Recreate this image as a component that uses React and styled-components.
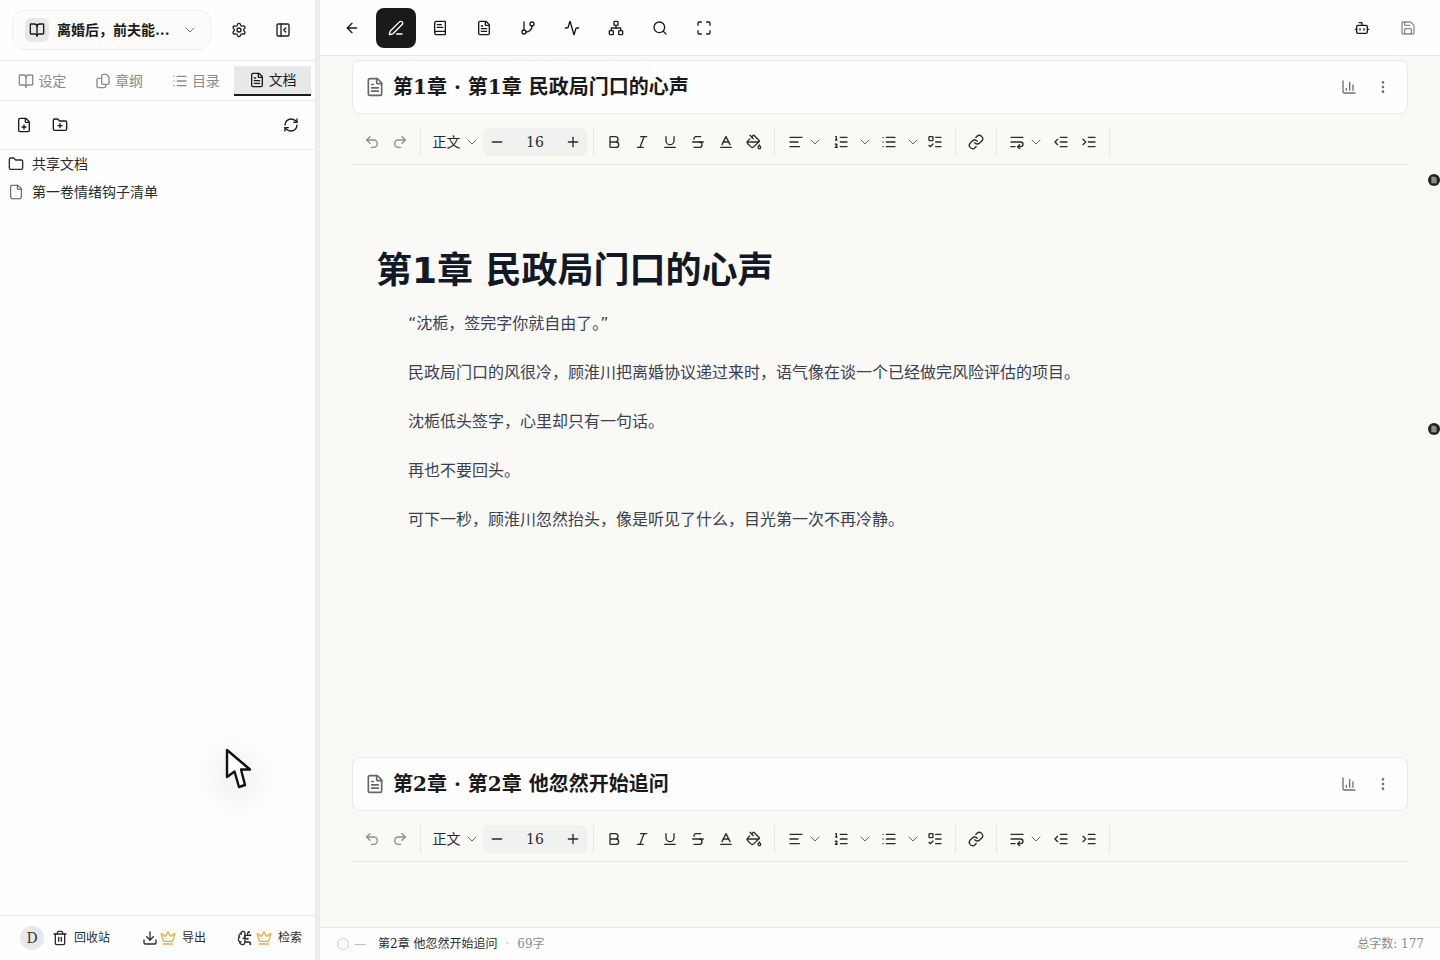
import React from 'react'
import styled, { createGlobalStyle } from 'styled-components'
import {
  Activity, AlignLeft, ArrowLeft, Baseline, Bold, BookOpen, BookText, Bot, BrainCircuit, ChartColumn, ChevronDown,
  Crown, Download, EllipsisVertical, File, FilePlus, FileText, Folder, FolderPlus, GitBranch, IndentDecrease,
  IndentIncrease, Italic, Link, List, ListOrdered, ListTodo, Maximize, Minus, Network, PaintBucket,
  PanelLeftClose, PenLine, Plus, Redo2, RefreshCw, Save, Search, Settings, Strikethrough, Trash2, Underline,
  Undo2, WrapText, Hexagon,
} from 'lucide-react'

const Global = createGlobalStyle`
  html, body { margin: 0; padding: 0; height: 100%; }
  body {
    font-family: "DejaVu Serif", "Noto Sans CJK SC", serif;
    line-height: 1.5;
    color: #1a1a1a;
    background: #fff;
    overflow: hidden;
  }
  #root { height: 100%; }
`

const Page = styled.div`
  display: flex;
  width: 1440px;
  height: 960px;
  position: relative;
  overflow: hidden;
`

/* sidebar */
const Sidebar = styled.aside`
  width: 315px;
  flex-shrink: 0;
  display: flex;
  flex-direction: column;
  background: #fefefe;
`
const Resizer = styled.div`
  width: 5px;
  flex-shrink: 0;
  background: #ececec;
`
const SideHead = styled.div`
  height: 60px;
  flex-shrink: 0;
  display: flex;
  align-items: center;
  padding-left: 12px;
  border-bottom: 1px solid #e8e8e8;
  box-sizing: content-box;
`
const BookPicker = styled.div`
  width: 199px;
  height: 40px;
  flex-shrink: 0;
  box-sizing: border-box;
  display: flex;
  align-items: center;
  padding: 0 12px;
  background: #fdfcfb;
  border: 1px solid #f1f0ee;
  border-radius: 12px;
`
const BookIcon = styled.span`
  width: 24px;
  height: 24px;
  border-radius: 6px;
  background: #e8e8e6;
  display: flex;
  align-items: center;
  justify-content: center;
  margin-right: 8px;
  flex-shrink: 0;
`
const BookName = styled.span`
  flex: 1;
  font-size: 14px;
  font-weight: 700;
  white-space: nowrap;
`
const HeadIcons = styled.div`
  display: flex;
  margin-left: 6px;
`
const HeadBtn = styled.span`
  width: 44px;
  height: 32px;
  display: flex;
  align-items: center;
  justify-content: center;
`
const Tabs = styled.div`
  height: 39px;
  flex-shrink: 0;
  display: grid;
  grid-template-columns: repeat(4, 1fr);
  padding: 0 4px;
  align-items: start;
  border-bottom: 1px solid #e8e8e8;
`
const Tab = styled.div`
  height: 30px;
  margin-top: 5px;
  box-sizing: border-box;
  display: flex;
  align-items: center;
  justify-content: center;
  gap: 4px;
  font-size: 14px;
  color: ${(p) => (p.active ? '#1a1a1a' : '#8a8a8a')};
  background: ${(p) => (p.active ? '#e8e8e8' : 'transparent')};
  border-bottom: ${(p) => (p.active ? '2px solid #1a1a1a' : 'none')};
`
const SideTools = styled.div`
  height: 48px;
  flex-shrink: 0;
  display: flex;
  align-items: center;
  padding: 0 6px;
  border-bottom: 1px solid #e8e8e8;
`
const SideTool = styled.span`
  width: 36px;
  height: 32px;
  display: flex;
  align-items: center;
  justify-content: center;
  ${(p) => p.push && 'margin-left: auto;'}
`
const Tree = styled.div`
  flex: 1;
`
const TreeRow = styled.div`
  height: 28px;
  display: flex;
  align-items: center;
  gap: 8px;
  padding-left: 8px;
  font-size: 14px;
  color: #2a2a2a;
`
const SideFoot = styled.div`
  height: 44px;
  flex-shrink: 0;
  display: flex;
  align-items: center;
  padding: 0 13px 0 20px;
  border-top: 1px solid #e8e8e8;
  font-size: 12px;
  color: #2a2a2a;
  white-space: nowrap;
`
const Avatar = styled.span`
  width: 24px;
  height: 24px;
  flex-shrink: 0;
  border-radius: 50%;
  background: #e8e8e8;
  display: flex;
  align-items: center;
  justify-content: center;
  font-size: 14px;
  color: #333;
  margin-right: 8px;
`
const FootBtn = styled.span`
  display: flex;
  align-items: center;
  gap: ${(p) => p.gap}px;
  margin-left: ${(p) => p.left || 0}px;
`
const FootLabel = styled.span`
  margin-left: ${(p) => p.left}px;
`

/* main */
const Main = styled.main`
  flex: 1;
  min-width: 0;
  display: flex;
  flex-direction: column;
  background: #faf9f6;
`
const TopBar = styled.div`
  height: 55px;
  flex-shrink: 0;
  display: flex;
  align-items: center;
  gap: 4px;
  padding: 0 12px;
  background: #fefefe;
  border-bottom: 1px solid #e8e8e8;
`
const TopBtn = styled.span`
  width: 40px;
  height: 40px;
  display: flex;
  align-items: center;
  justify-content: center;
  border-radius: 8px;
  color: ${(p) => (p.active ? '#fff' : '#1a1a1a')};
  background: ${(p) => (p.active ? '#1a1a1a' : 'transparent')};
`
const TopRight = styled.div`
  display: flex;
  gap: 6px;
  margin-left: auto;
`
const Scroll = styled.div`
  flex: 1;
  min-height: 0;
  overflow: hidden;
  padding: 0 32px;
`
const Chapter = styled.section`
  height: 697px;
  padding-top: 4px;
  box-sizing: border-box;
`
const TitleCard = styled.div`
  height: 54px;
  box-sizing: border-box;
  display: flex;
  align-items: center;
  padding: 0 7px 0 12px;
  background: #fefefe;
  border: 1px solid #e9e9e7;
  border-radius: 8px;
`
const TitleText = styled.h2`
  margin: 0 0 0 8px;
  flex: 1;
  font-size: 20px;
  font-weight: 700;
  color: #1a1a1a;
`
const TitleBtn = styled.span`
  width: 34px;
  display: flex;
  justify-content: center;
  color: #6f6f6f;
`
const Toolbar = styled.div`
  height: 51px;
  box-sizing: border-box;
  display: flex;
  align-items: center;
  padding: 6px 0 0 6px;
  border-bottom: 1px solid #e8e8e8;
`
const ToolBtn = styled.span`
  width: ${(p) => p.w || 28}px;
  height: 28px;
  flex-shrink: 0;
  display: flex;
  align-items: center;
  justify-content: center;
  gap: ${(p) => p.gap || 0}px;
  margin-left: ${(p) => p.ml || 0}px;
  color: ${(p) => (p.faded ? '#8c8c8c' : '#2a2a2a')};
`
const Sep = styled.span`
  width: 1px;
  height: 28px;
  margin: 0 6px;
  background: #e6e6e3;
  flex-shrink: 0;
`
const StyleSelect = styled.span`
  width: 56px;
  box-sizing: border-box;
  padding-left: 2px;
  display: flex;
  align-items: center;
  justify-content: center;
  gap: 3px;
  font-size: 14px;
  color: #2a2a2a;
`
const Stepper = styled.span`
  width: 104px;
  height: 28px;
  display: flex;
  align-items: center;
  justify-content: space-between;
  background: #f1f1ef;
  border-radius: 6px;
  font-size: 14px;
  color: #2a2a2a;
`
const Editor = styled.div`
  padding: 81px 24px 0;
`
const Heading = styled.h1`
  margin: 0 0 15px;
  font-family: "DejaVu Sans", "Noto Sans CJK SC", sans-serif;
  font-size: 36px;
  line-height: 50px;
  font-weight: 700;
  color: #111827;
`
const Para = styled.p`
  margin: 0 0 23.4px;
  font-family: "DejaVu Sans", "Noto Sans CJK SC", sans-serif;
  font-size: 16px;
  line-height: 25.6px;
  text-indent: 32px;
  color: #374151;
`
const StatusBar = styled.div`
  height: 33px;
  flex-shrink: 0;
  box-sizing: border-box;
  display: flex;
  align-items: center;
  padding: 0 16px;
  background: #fefefe;
  border-top: 1px solid #e8e8e8;
  font-size: 12px;
  color: #8a8a8a;
`
const StatusName = styled.span`
  color: #2a2a2a;
  margin-left: 8px;
`
const Dim = styled.span`
  margin: 0 ${(p) => p.gap || 0}px;
  color: #bdbdbd;
`
const Total = styled.span`
  margin-left: auto;
`

/* things lying over the page */
const Marker = styled.span`
  position: absolute;
  right: 0;
  top: ${(p) => p.top}px;
  width: 12px;
  height: 12px;
  border-radius: 50%;
  background: #222;
  display: flex;
  align-items: center;
  justify-content: center;
`
const Cursor = styled.svg`
  position: absolute;
  left: 224px;
  top: 746px;
  overflow: visible;
  filter: drop-shadow(0 8px 18px rgba(0, 0, 0, 0.2));
`

const Ico = ({ as: I, size = 16, sw = 2 }) => <I size={size} strokeWidth={sw} />

const Chev = () => <ChevronDown size={16} strokeWidth={1.5} color="#666" />

const StackedPages = () => (
  <svg width="16" height="16" viewBox="0 0 24 24" fill="none" stroke="currentColor" strokeWidth="2" strokeLinecap="round" strokeLinejoin="round">
    <path d="M8 8H5a2 2 0 0 0-2 2v10a2 2 0 0 0 2 2h9a2 2 0 0 0 2-2v-3" />
    <path d="M10 4a2 2 0 0 1 2-2h5l4 4v9a2 2 0 0 1-2 2h-7a2 2 0 0 1-2-2z" />
  </svg>
)

const EditorToolbar = () => (
  <Toolbar>
    <ToolBtn faded><Ico as={Undo2} /></ToolBtn>
    <ToolBtn faded><Ico as={Redo2} /></ToolBtn>
    <Sep />
    <StyleSelect>正文 <Chev /></StyleSelect>
    <Stepper>
      <ToolBtn><Ico as={Minus} /></ToolBtn>
      16
      <ToolBtn><Ico as={Plus} /></ToolBtn>
    </Stepper>
    <Sep />
    <ToolBtn><Ico as={Bold} /></ToolBtn>
    <ToolBtn><Ico as={Italic} /></ToolBtn>
    <ToolBtn><Ico as={Underline} /></ToolBtn>
    <ToolBtn><Ico as={Strikethrough} /></ToolBtn>
    <ToolBtn><Ico as={Baseline} /></ToolBtn>
    <ToolBtn><Ico as={PaintBucket} /></ToolBtn>
    <Sep />
    <ToolBtn w={48} gap={3}><Ico as={AlignLeft} /><Chev /></ToolBtn>
    <ToolBtn w={48} gap={8}><Ico as={ListOrdered} /><Chev /></ToolBtn>
    <ToolBtn w={48} gap={8}><Ico as={List} /><Chev /></ToolBtn>
    <ToolBtn ml={-4}><Ico as={ListTodo} /></ToolBtn>
    <Sep />
    <ToolBtn><Ico as={Link} /></ToolBtn>
    <Sep />
    <ToolBtn w={46} gap={3}><Ico as={WrapText} /><Chev /></ToolBtn>
    <ToolBtn ml={-2}><Ico as={IndentDecrease} /></ToolBtn>
    <ToolBtn><Ico as={IndentIncrease} /></ToolBtn>
    <Sep />
  </Toolbar>
)

const ChapterBlock = ({ title, children }) => (
  <Chapter>
    <TitleCard>
      <FileText size={20} strokeWidth={2} color="#666" />
      <TitleText>{title}</TitleText>
      <TitleBtn><Ico as={ChartColumn} /></TitleBtn>
      <TitleBtn><Ico as={EllipsisVertical} /></TitleBtn>
    </TitleCard>
    <EditorToolbar />
    {children}
  </Chapter>
)

export default function App() {
  return (
    <Page>
      <Global />
      <Sidebar>
        <SideHead>
          <BookPicker>
            <BookIcon><Ico as={BookOpen} /></BookIcon>
            <BookName>离婚后，前夫能...</BookName>
            <ChevronDown size={16} strokeWidth={1.5} color="#777" />
          </BookPicker>
          <HeadIcons>
            <HeadBtn><Ico as={Settings} /></HeadBtn>
            <HeadBtn><Ico as={PanelLeftClose} /></HeadBtn>
          </HeadIcons>
        </SideHead>
        <Tabs>
          <Tab><Ico as={BookOpen} /> 设定</Tab>
          <Tab><StackedPages /> 章纲</Tab>
          <Tab><Ico as={List} /> 目录</Tab>
          <Tab active><Ico as={FileText} /> 文档</Tab>
        </Tabs>
        <SideTools>
          <SideTool><Ico as={FilePlus} /></SideTool>
          <SideTool><Ico as={FolderPlus} /></SideTool>
          <SideTool push><Ico as={RefreshCw} /></SideTool>
        </SideTools>
        <Tree>
          <TreeRow><Folder size={16} strokeWidth={2} />共享文档</TreeRow>
          <TreeRow><File size={16} strokeWidth={1.6} color="#555" />第一卷情绪钩子清单</TreeRow>
        </Tree>
        <SideFoot>
          <Avatar>D</Avatar>
          <FootBtn gap={6}><Ico as={Trash2} />回收站</FootBtn>
          <FootBtn left={32} gap={2}>
            <Ico as={Download} />
            <Crown size={16} strokeWidth={2} color="#f2a93b" />
            <FootLabel left={4}>导出</FootLabel>
          </FootBtn>
          <FootBtn left={31} gap={3}>
            <Ico as={BrainCircuit} />
            <Crown size={16} strokeWidth={2} color="#f2a93b" />
            <FootLabel left={3}>检索</FootLabel>
          </FootBtn>
        </SideFoot>
      </Sidebar>
      <Resizer />
      <Main>
        <TopBar>
          <TopBtn><Ico as={ArrowLeft} /></TopBtn>
          <TopBtn active><Ico as={PenLine} /></TopBtn>
          <TopBtn><Ico as={BookText} /></TopBtn>
          <TopBtn><Ico as={FileText} /></TopBtn>
          <TopBtn><Ico as={GitBranch} /></TopBtn>
          <TopBtn><Ico as={Activity} /></TopBtn>
          <TopBtn><Ico as={Network} /></TopBtn>
          <TopBtn><Ico as={Search} /></TopBtn>
          <TopBtn><Ico as={Maximize} /></TopBtn>
          <TopRight>
            <TopBtn><Ico as={Bot} /></TopBtn>
            <TopBtn><Save size={16} strokeWidth={2} color="#8c8c8c" /></TopBtn>
          </TopRight>
        </TopBar>
        <Scroll>
          <ChapterBlock title="第1章 · 第1章 民政局门口的心声">
            <Editor>
              <Heading>第1章 民政局门口的心声</Heading>
              <Para>“沈栀，签完字你就自由了。”</Para>
              <Para>民政局门口的风很冷，顾淮川把离婚协议递过来时，语气像在谈一个已经做完风险评估的项目。</Para>
              <Para>沈栀低头签字，心里却只有一句话。</Para>
              <Para>再也不要回头。</Para>
              <Para>可下一秒，顾淮川忽然抬头，像是听见了什么，目光第一次不再冷静。</Para>
            </Editor>
          </ChapterBlock>
          <ChapterBlock title="第2章 · 第2章 他忽然开始追问" />
        </Scroll>
        <StatusBar>
          <Hexagon size={14} strokeWidth={1.4} color="#c4c4c4" />
          <Dim gap={4}>—</Dim>
          <StatusName>第2章 他忽然开始追问</StatusName>
          <Dim gap={8}>·</Dim>
          69字
          <Total>总字数: 177</Total>
        </StatusBar>
      </Main>
      <Marker top={174}><FileText size={8} strokeWidth={1} fill="#9a9a9a" color="#555" /></Marker>
      <Marker top={423}><FileText size={8} strokeWidth={1} fill="#9a9a9a" color="#555" /></Marker>
      <Cursor width="30" height="46" viewBox="0 0 30 46">
        <path d="M3 4 L3 31 L10.5 25.5 L15 41 L21 39 L17 23.5 L26 23.5 Z" fill="#fff" stroke="#111" strokeWidth="2.4" strokeLinejoin="round" />
      </Cursor>
    </Page>
  )
}
